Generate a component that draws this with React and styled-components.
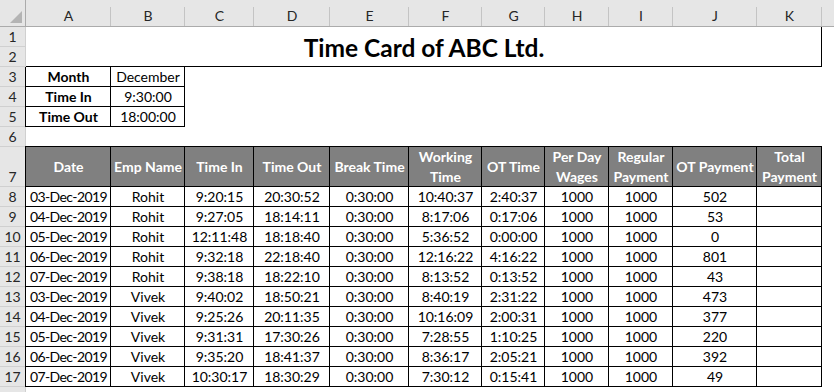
import React from "react";
import styled, { createGlobalStyle, css } from "styled-components";

const GlobalStyle = createGlobalStyle`
  html, body {
    margin: 0;
    padding: 0;
    background: #ffffff;
    overflow: hidden;
  }
  body {
    font-family: Lato, "Liberation Sans", sans-serif;
  }
`;

const HEADER_BG = "#e6e6e6";
const LINE = "#000000";

const columns = ["A", "B", "C", "D", "E", "F", "G", "H", "I", "J", "K"];

const Sheet = styled.div`
  display: grid;
  grid-template-columns: 26px 85px 74px 69px 76px 79px 73px 63px 64px 64px 84px 65px 1fr;
  grid-template-rows: 27px repeat(6, 20px) 40px repeat(11, 20px);
  width: 834px;
  height: 392px;
  overflow: hidden;
  color: #000;
`;

const Corner = styled.div`
  background: ${HEADER_BG};
  box-shadow: inset -1px -1px 0 #ababab;
  display: flex;
  align-items: flex-end;
  justify-content: flex-end;
  padding: 0 4px 4px 0;
  box-sizing: border-box;
`;

const ColHead = styled.div`
  position: relative;
  background: ${HEADER_BG};
  box-shadow: inset 0 -1px 0 #ababab;
  display: flex;
  align-items: flex-end;
  justify-content: center;
  padding-bottom: 3px;
  box-sizing: border-box;
  font-size: 14px;
  color: #262626;

  &::after {
    content: "";
    position: absolute;
    right: 0;
    bottom: 1px;
    width: 1px;
    height: 19px;
    background: ${(p) => (p.$noDivider ? "transparent" : "#c4c4c4")};
  }
`;

const RowHead = styled.div`
  background: ${HEADER_BG};
  box-shadow: inset -1px -1px 0 #d0d0d0, inset -1px 0 0 #ababab;
  display: flex;
  align-items: flex-end;
  justify-content: center;
  font-size: 14px;
  line-height: 20px;
  color: #262626;
  padding-right: 1px;
`;

const Blank = styled.div`
  grid-column: span ${(p) => p.$span || 1};
  background: #fff;
`;

const Title = styled.div`
  grid-column: span 11;
  grid-row: span 2;
  display: flex;
  align-items: center;
  justify-content: center;
  font-weight: 700;
  font-size: 24.5px;
  box-shadow: inset -1px -1px 0 ${LINE};
  padding-top: 1px;
`;

const Cell = styled.div`
  display: flex;
  align-items: center;
  justify-content: center;
  text-align: center;
  font-size: 14px;
  line-height: 20px;
  white-space: pre;
  overflow: hidden;
  letter-spacing: ${(p) => (p.$tight ? "-0.6px" : "normal")};
  font-weight: ${(p) => (p.$bold ? 700 : 400)};
  background: #fff;
  box-shadow: ${(p) =>
    [
      `inset -1px -1px 0 ${LINE}`,
      p.$first ? `-1px 0 0 ${LINE}` : null,
      p.$capTop ? `0 -1px 0 ${LINE}` : null,
      p.$first && p.$capTop ? `-1px -1px 0 ${LINE}` : null,
    ]
      .filter(Boolean)
      .join(", ")};

  ${(p) =>
    p.$head &&
    css`
      background: #808080;
      color: #fff;
      font-weight: 700;
    `}
`;

const Triangle = () => (
  <svg width="12" height="12" viewBox="0 0 12 12">
    <polygon points="12,0 12,12 0,12" fill="#b4b4b4" />
  </svg>
);

const info = [
  ["Month", "December"],
  ["Time In", "9:30:00"],
  ["Time Out", "18:00:00"],
];

const headings = [
  "Date",
  "Emp Name",
  "Time In",
  "Time Out",
  "Break Time",
  "Working\nTime",
  "OT Time",
  "Per Day\nWages",
  "Regular\nPayment",
  "OT Payment",
  "Total\nPayment",
];

const records = [
  ["03-Dec-2019", "Rohit", "9:20:15", "20:30:52", "0:30:00", "10:40:37", "2:40:37", "1000", "1000", "502"],
  ["04-Dec-2019", "Rohit", "9:27:05", "18:14:11", "0:30:00", "8:17:06", "0:17:06", "1000", "1000", "53"],
  ["05-Dec-2019", "Rohit", "12:11:48", "18:18:40", "0:30:00", "5:36:52", "0:00:00", "1000", "1000", "0"],
  ["06-Dec-2019", "Rohit", "9:32:18", "22:18:40", "0:30:00", "12:16:22", "4:16:22", "1000", "1000", "801"],
  ["07-Dec-2019", "Rohit", "9:38:18", "18:22:10", "0:30:00", "8:13:52", "0:13:52", "1000", "1000", "43"],
  ["03-Dec-2019", "Vivek", "9:40:02", "18:50:21", "0:30:00", "8:40:19", "2:31:22", "1000", "1000", "473"],
  ["04-Dec-2019", "Vivek", "9:25:26", "20:11:35", "0:30:00", "10:16:09", "2:00:31", "1000", "1000", "377"],
  ["05-Dec-2019", "Vivek", "9:31:31", "17:30:26", "0:30:00", "7:28:55", "1:10:25", "1000", "1000", "220"],
  ["06-Dec-2019", "Vivek", "9:35:20", "18:41:37", "0:30:00", "8:36:17", "2:05:21", "1000", "1000", "392"],
  ["07-Dec-2019", "Vivek", "10:30:17", "18:30:29", "0:30:00", "7:30:12", "0:15:41", "1000", "1000", "49"],
];

export default function App() {
  return (
    <>
      <GlobalStyle />
      <Sheet>
        <Corner>
          <Triangle />
        </Corner>
        {columns.map((c) => (
          <ColHead key={c}>{c}</ColHead>
        ))}
        <ColHead $noDivider />

        {/* rows 1-2: merged title */}
        <RowHead>1</RowHead>
        <Title>Time Card of ABC Ltd.</Title>
        <Blank />
        <RowHead>2</RowHead>
        <Blank />

        {/* rows 3-5: month block */}
        {info.map(([label, value], i) => (
          <React.Fragment key={label}>
            <RowHead>{i + 3}</RowHead>
            <Cell $bold $first>
              {label}
            </Cell>
            <Cell>{value}</Cell>
            <Blank $span={10} />
          </React.Fragment>
        ))}

        <RowHead>6</RowHead>
        <Blank $span={12} />

        {/* row 7: table heading */}
        <RowHead>7</RowHead>
        {headings.map((h, i) => (
          <Cell key={h} $head $capTop $first={i === 0}>
            {h}
          </Cell>
        ))}
        <Blank />

        {records.map((r, i) => (
          <React.Fragment key={i}>
            <RowHead>{i + 8}</RowHead>
            {r.map((v, j) => (
              <Cell key={j} $first={j === 0} $tight={j === 0}>
                {v}
              </Cell>
            ))}
            <Cell />
            <Blank />
          </React.Fragment>
        ))}

        {/* row 18 is cut off by the window edge */}
        <RowHead />
        <Blank $span={12} />
      </Sheet>
    </>
  );
}
